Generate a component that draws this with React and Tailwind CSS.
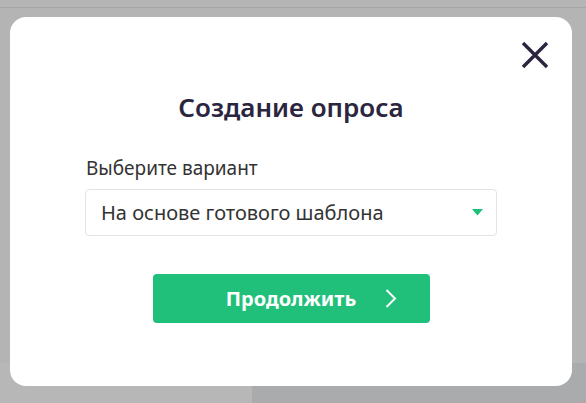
import React from "react";

export default function App() {
  return (
    <div className="relative h-[403px] w-[586px] overflow-hidden bg-[#b4b4b5]" style={{ fontFamily: '"Noto Sans", "Open Sans", sans-serif' }}>
      <div className="flex h-full flex-col">
        <div className="h-[8px] border-b border-[#a6a6a7] bg-[#b5b5b6]" />
        <div className="flex-1" />
        <div className="flex h-[40px]">
          <div className="w-[252px] bg-[#b7b7b7]" />
          <div className="flex-1 bg-[#aaabad]" />
        </div>
      </div>
      <div className="absolute left-[10px] top-[17px] flex h-[369px] w-[562px] flex-col items-center rounded-[16px] bg-white">
        <button className="absolute right-[23px] top-[24px] flex h-[28px] w-[28px] items-center justify-center">
          <svg width="28" height="28" viewBox="0 0 28 28" fill="none">
            <path d="M2 2 L26 26 M26 2 L2 26" stroke="#2b2540" strokeWidth="3.4" strokeLinecap="butt" />
          </svg>
        </button>
        <h1 className="mt-[73px] text-[26px] font-semibold leading-[34px] text-[#2b2540]">Создание опроса</h1>
        <div className="mt-[32px] w-[412px]">
          <div className="pl-[1px] text-[19px] leading-[24px] text-[#333]">Выберите вариант</div>
          <div className="mt-[9px] flex h-[47px] items-center justify-between rounded-[4px] border border-[#e3e3e3] pl-[15px] pr-[13px]">
            <span className="text-[20px] leading-[28px] text-[#333]">На основе готового шаблона</span>
            <svg width="11" height="7" viewBox="0 0 11 7">
              <path d="M0 0 H11 L5.5 6.5 Z" fill="#20bf7a" />
            </svg>
          </div>
        </div>
        <button className="relative mt-[38px] flex h-[49px] w-[277px] items-center justify-center rounded-[4px] bg-[#20bf7a]">
          <span className="text-[20px] font-bold text-white">Продолжить</span>
          <svg className="absolute right-[32px] top-[14px]" width="14" height="21" viewBox="0 0 14 21" fill="none">
            <path d="M2.5 2 L11 10.5 L2.5 19" stroke="white" strokeWidth="2" />
          </svg>
        </button>
      </div>
    </div>
  );
}
